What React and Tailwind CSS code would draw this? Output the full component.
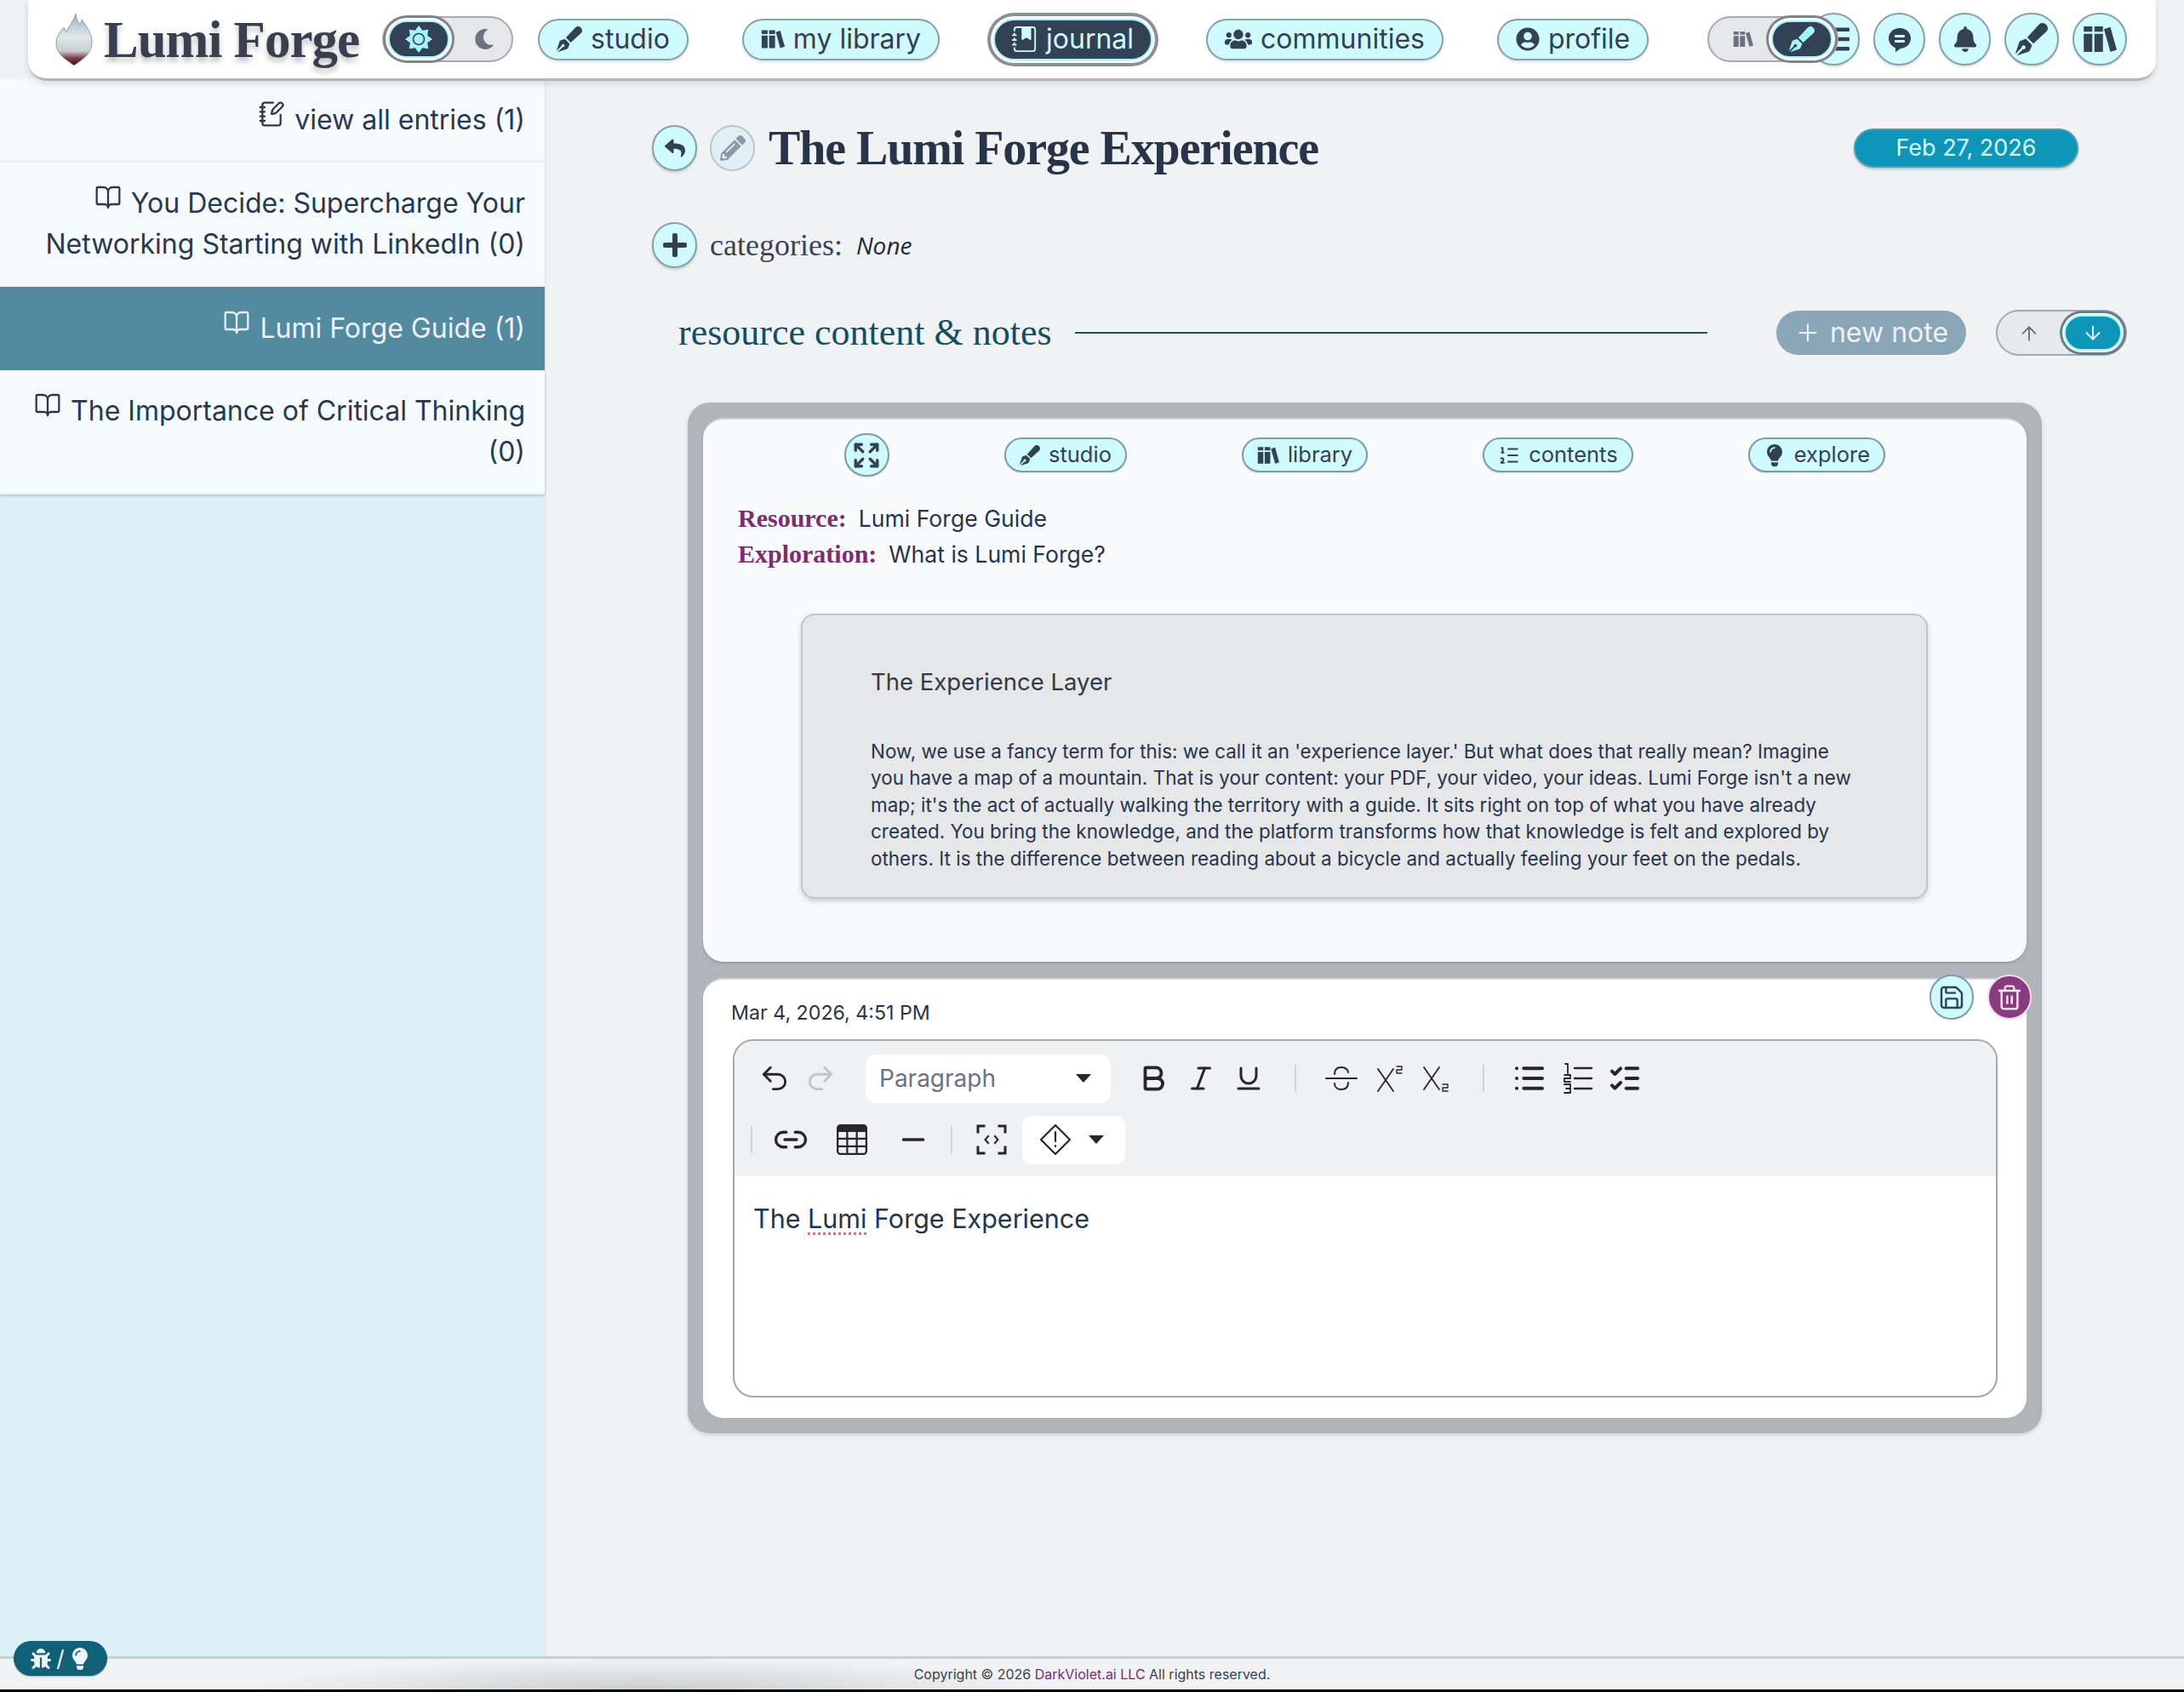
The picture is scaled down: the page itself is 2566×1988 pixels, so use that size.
import React from "react";
import { NotebookPen, BookOpen, Expand, ListOrdered, Save, Trash2, ArrowUp, ArrowDown, Undo2, Redo2, Bold, Italic, Underline, List, ListChecks, Link2, Minus, Plus } from "lucide-react";
import { FaPenFancy, FaUsers, FaUserCircle, FaBell, FaReply, FaPencilAlt, FaPlus, FaLightbulb, FaBug, FaMoon, FaListOl } from "react-icons/fa";
import { BsJournalBookmarkFill, BsTable } from "react-icons/bs";

const sans = "font-['Inter','Liberation_Sans',sans-serif]";
const serif = "font-['Liberation_Serif',serif]";

function Flame() {
  return (
    <svg viewBox="0 0 44 62" className="w-[44px] h-[62px] shrink-0">
      <defs>
        <linearGradient id="fl" x1="0" y1="0" x2="0" y2="1">
          <stop offset="0" stopColor="#9fb4c0" />
          <stop offset="0.45" stopColor="#dfe7ea" />
          <stop offset="0.72" stopColor="#c9cfd2" />
          <stop offset="0.86" stopColor="#7d3b44" />
          <stop offset="1" stopColor="#3d0d14" />
        </linearGradient>
      </defs>
      <path d="M24 1c1 7 3 10 5 13 1-2 2-4 2-6 6 8 12 17 12 27 0 13-10 19-21 27C11 54 1 48 1 36c0-8 5-14 9-19 1 2 1 4 3 6 2-7 9-13 11-22z" fill="url(#fl)" stroke="#8f9aa3" strokeWidth="1" />
    </svg>
  );
}

function Books({ className }) {
  return (
    <svg viewBox="0 0 32 32" className={className} fill="currentColor">
      <path d="M1 4h8v5H1zM1 11h8v17H1zM11 4h8v5h-8zM11 11h8v17h-8z" />
      <path d="M20 6.500l6-2 6 21.500-6 2z" />
    </svg>
  );
}

function Sun() {
  const pts = [];
  for (let i = 0; i < 16; i++) {
    const r = i % 2 ? 11 : 16;
    const a = (i * Math.PI) / 8 - Math.PI / 2;
    pts.push(`${16 + r * Math.cos(a)},${16 + r * Math.sin(a)}`);
  }
  return (
    <svg viewBox="0 0 32 32" className="w-[32px] h-[32px]">
      <polygon points={pts.join(" ")} fill="#a5f3fc" />
      <circle cx="16" cy="16" r="6.5" fill="#a5f3fc" stroke="#334155" strokeWidth="1.6" />
    </svg>
  );
}

function Chat() {
  return (
    <svg viewBox="0 0 32 32" className="w-[32px] h-[32px]">
      <path d="M16 3C8.500 3 3 8.300 3 15c0 5.300 3.500 9.500 8 11.200V31l6.500-4.200C24.500 26.200 29 21.300 29 15 29 8.300 23.500 3 16 3z" fill="#334155" />
      <rect x="10" y="11" width="12" height="3" rx="1" fill="#cffafe" />
      <rect x="10" y="17" width="12" height="3" rx="1" fill="#cffafe" />
    </svg>
  );
}

function Caret({ className }) {
  return (
    <svg viewBox="0 0 18 10" className={className}>
      <polygon points="0,0 18,0 9,10" fill="#27272a" />
    </svg>
  );
}

function TIcon({ children, sw = 2 }) {
  return (
    <svg viewBox="0 0 38 38" className="w-[38px] h-[38px]" fill="none" stroke="#27272a" strokeWidth={sw} strokeLinecap="round" strokeLinejoin="round">
      {children}
    </svg>
  );
}

function NavPill({ icon, children }) {
  return (
    <div className="h-[49px] px-[20px] flex items-center gap-[10px] rounded-full bg-[#cffafe] border-2 border-[#86a1a9] text-[#334155] text-[32px] shadow-[0_2px_3px_rgba(0,0,0,0.12)]">
      {icon}
      <span>{children}</span>
    </div>
  );
}

function Round({ children, className = "w-[61px]" }) {
  return (
    <div className={`h-[62px] rounded-full bg-[#cffafe] border-2 border-[#86a1a9] flex items-center justify-center text-[#334155] shadow-[0_2px_3px_rgba(0,0,0,0.12)] ${className}`}>
      {children}
    </div>
  );
}

function Small({ children, className = "" }) {
  return (
    <div className={`w-[53px] h-[54px] rounded-full bg-[#cffafe] border-2 border-[#86a1a9] flex items-center justify-center text-[#334155] shadow-[0_2px_3px_rgba(0,0,0,0.15)] shrink-0 ${className}`}>
      {children}
    </div>
  );
}

function CardPill({ icon, children }) {
  return (
    <div className="h-[41px] px-[16px] flex items-center gap-[10px] rounded-full bg-[#cffafe] border-2 border-[#7f9ca5] text-[#334155] text-[25.5px] shadow-[0_1px_2px_rgba(0,0,0,0.12)]">
      {icon}
      <span>{children}</span>
    </div>
  );
}

function SideItem({ icon, children, active, last }) {
  return (
    <div className={`px-[23px] text-right text-[32px] leading-[48px] ${active ? "py-[25px] bg-[#528a9f] text-[#eef1fb]" : "py-[24px] bg-[#f5fafd] text-[#2b384c] border-b-2 border-[#eef1f3]"} ${last ? "shadow-[0_2px_3px_rgba(0,0,0,0.18)]" : ""}`}>
      <span className="inline-block w-[32px] h-[20px] mr-[11px]">{icon}</span>
      {children}
    </div>
  );
}

function Tb({ children, className = "" }) {
  return <div className={`w-[56px] h-[56px] flex items-center justify-center text-[#27272a] shrink-0 ${className}`}>{children}</div>;
}

function Tw({ children, className = "" }) {
  return <div className={`w-[72px] h-[56px] flex items-center justify-center text-[#27272a] shrink-0 ${className}`}>{children}</div>;
}

function Sep({ className = "" }) {
  return <div className={`w-[2px] h-[32px] bg-[#d2d4d8] shrink-0 ${className}`} />;
}

const sideIcon = "block w-[32px] h-[32px] -mt-[14px]";

export default function App() {
  return (
    <div className={`${sans} relative w-[2566px] h-[1988px] overflow-hidden bg-[#f1f2f4] flex flex-col`}>
      <header className="relative z-20 mx-[33px] h-[95px] shrink-0 bg-white rounded-b-[22px] border-b-[3px] border-[#b3b4ba] shadow-[0_3px_8px_rgba(0,0,0,0.12)] flex items-center pl-[32px] pr-[34px]">
        <Flame />
        <div className={`${serif} ml-[13px] text-[61px] font-bold leading-none text-[#38404f] tracking-[-1px] [text-shadow:0_5px_6px_rgba(0,0,0,0.25)] whitespace-nowrap`}>Lumi Forge</div>
        <div className="relative ml-[27px] w-[154px] h-[54px] rounded-full bg-[#e5e7eb] border-2 border-[#a6a9af] shrink-0">
          <div className="absolute left-[5px] top-[3px] w-[72px] h-[44px] rounded-full bg-[#334155] border-2 border-[#a5f3fc] shadow-[0_0_0_3px_white,0_0_0_6px_#80848c] flex items-center justify-center"><Sun /></div>
          <FaMoon className="absolute left-[106px] top-[13px] text-[#6b7280] w-[24px] h-[24px]" />
        </div>
        <div className="ml-[29px] flex items-center gap-[63px]">
          <NavPill icon={<FaPenFancy className="w-[30px] h-[30px]" />}>studio</NavPill>
          <NavPill icon={<Books className="w-[28px] h-[28px]" />}>my library</NavPill>
          <div className="h-[49px] px-[20px] flex items-center gap-[10px] rounded-full bg-[#334155] border-2 border-[#a5f3fc] text-[#cffafe] text-[32px] shadow-[0_0_0_3px_white,0_0_0_7px_#8b8f98]">
            <BsJournalBookmarkFill className="w-[30px] h-[32px]" />
            <span>journal</span>
          </div>
          <NavPill icon={<FaUsers className="w-[32px] h-[32px]" />}>communities</NavPill>
          <NavPill icon={<FaUserCircle className="w-[28px] h-[28px]" />}>profile</NavPill>
        </div>
        <div className="ml-auto flex items-center gap-[16px]">
          <div className="relative z-10 w-[154px] h-[54px] -mr-[52px] rounded-full bg-[#e5e7eb] border-2 border-[#a6a9af] shrink-0">
            <Books className="absolute left-[28px] top-[13px] w-[24px] h-[24px] text-[#6b7280]" />
            <div className="absolute right-[5px] top-[3px] w-[72px] h-[44px] rounded-full bg-[#334155] border-2 border-[#a5f3fc] shadow-[0_0_0_3px_white,0_0_0_6px_#80848c] flex items-center justify-center"><FaPenFancy className="w-[30px] h-[30px] text-[#a5f3fc]" /></div>
          </div>
          <Round><FaListOl className="w-[36px] h-[36px]" /></Round>
          <Round><Chat /></Round>
          <Round><FaBell className="w-[28px] h-[30px]" /></Round>
          <Round className="w-[64px]"><FaPenFancy className="w-[38px] h-[38px]" /></Round>
          <Round className="w-[64px]"><Books className="w-[40px] h-[40px]" /></Round>
        </div>
      </header>

      <div className="flex-1 min-h-0 flex">
        <aside className="w-[642px] shrink-0 -mt-[2px] bg-[#dcf1f7] border-r-2 border-[#e7e9ec]">
          <SideItem icon={<NotebookPen className={sideIcon} strokeWidth={1.7} />}>view all entries (1)</SideItem>
          <SideItem icon={<BookOpen className={sideIcon} strokeWidth={1.7} />}>You Decide: Supercharge Your Networking Starting with LinkedIn (0)</SideItem>
          <SideItem active icon={<BookOpen className={sideIcon} strokeWidth={1.7} />}>Lumi Forge Guide (1)</SideItem>
          <SideItem last icon={<BookOpen className={sideIcon} strokeWidth={1.7} />}>The Importance of Critical Thinking (0)</SideItem>
        </aside>

        <main className="flex-1 min-w-0 pl-[124px] pr-[67px] pt-[52px]">
          <div className="flex items-center h-[54px]">
            <Small><FaReply className="w-[24px] h-[24px]" /></Small>
            <Small className="ml-[15px] bg-[#dff1f4] border-[#b9c8cc] shadow-none"><FaPencilAlt className="w-[30px] h-[30px] text-[#9198a3]" /></Small>
            <h1 className={`${serif} ml-[16px] text-[56px] font-bold text-[#28344a] leading-none tracking-[-1.1px] whitespace-nowrap`}>The Lumi Forge Experience</h1>
            <div className="ml-auto mr-[57px] w-[264px] h-[46px] rounded-full bg-[#0e96b8] border-2 border-[#4b9db6] text-[#cffafe] text-[27px] flex items-center justify-center shadow-[0_2px_3px_rgba(0,0,0,0.2)]">Feb 27, 2026</div>
          </div>
          <div className="mt-[60px] flex items-center h-[54px]">
            <Small><FaPlus className="w-[32px] h-[32px]" /></Small>
            <span className={`${serif} ml-[15px] text-[36px] text-[#3b4252]`}>categories:</span>
            <span className="ml-[16px] text-[28px] italic text-[#1f2937] font-['Open_Sans',sans-serif]">None</span>
          </div>
          <div className="mt-[48px] flex items-center h-[55px] pl-[31px]">
            <span className={`${serif} text-[44px] text-[#124f61] whitespace-nowrap`}>resource content &amp; notes</span>
            <div className="flex-1 ml-[27px] mr-[81px] h-[2px] bg-[#1c5266]" />
            <div className="w-[223px] h-[52px] rounded-full bg-[#8aa6b7] text-[#f1f0f8] text-[32px] flex items-center justify-center gap-[10px]">
              <Plus className="w-[32px] h-[32px]" strokeWidth={1.6} />
              <span>new note</span>
            </div>
            <div className="relative ml-[35px] w-[154px] h-[54px] rounded-full bg-[#e8e9ec] border-2 border-[#a6a9af] shrink-0">
              <ArrowUp className="absolute left-[24px] top-[13px] w-[26px] h-[26px] text-[#5e6470]" strokeWidth={1.6} />
              <div className="absolute right-[4px] top-[4px] w-[68px] h-[42px] rounded-full bg-[#0e96b8] border-2 border-[#a5f3fc] shadow-[0_0_0_2px_white,0_0_0_5px_#64808f] flex items-center justify-center"><ArrowDown className="w-[26px] h-[26px] text-[#eafcff]" strokeWidth={1.8} /></div>
            </div>
          </div>

          <section className="mt-[55px] ml-[42px] w-[1591px] h-[1211px] rounded-[26px] bg-[#b0b5bc] p-[18px] flex flex-col gap-[19px] shadow-[0_2px_5px_rgba(0,0,0,0.15)]">
            <div className="h-[639px] shrink-0 rounded-[24px] bg-[#f9fafc] pt-[16px] border-t-2 border-[#d0d3d8] shadow-[0_2px_3px_rgba(0,0,0,0.15)]">
              <div className="flex items-center justify-center gap-[135px] h-[51px]">
                <div className="w-[53px] h-[51px] rounded-full bg-[#cffafe] border-2 border-[#7f9ca5] flex items-center justify-center text-[#334155] shadow-[0_1px_2px_rgba(0,0,0,0.12)]"><Expand className="w-[34px] h-[34px]" strokeWidth={2.4} /></div>
                <CardPill icon={<FaPenFancy className="w-[24px] h-[24px]" />}>studio</CardPill>
                <CardPill icon={<Books className="w-[26px] h-[26px]" />}>library</CardPill>
                <CardPill icon={<ListOrdered className="w-[26px] h-[26px]" strokeWidth={1.8} />}>contents</CardPill>
                <CardPill icon={<FaLightbulb className="w-[26px] h-[26px]" />}>explore</CardPill>
              </div>
              <div className="mt-[28px] pl-[41px] text-[26.6px] leading-[42px] text-[#28344a]">
                <div className="flex"><span className={`${serif} font-bold text-[#7b2d6e] text-[30px] mr-[14px]`}>Resource:</span><span>Lumi Forge Guide</span></div>
                <div className="flex"><span className={`${serif} font-bold text-[#7b2d6e] text-[30px] mr-[14px]`}>Exploration:</span><span>What is Lumi Forge?</span></div>
              </div>
              <div className="mt-[49px] ml-[115px] w-[1324px] h-[335px] rounded-[16px] bg-[#e5e7e9] border-2 border-[#c3c6cb] shadow-[0_3px_6px_rgba(0,0,0,0.18)] pl-[80px] pr-[80px] pt-[58px]">
                <div className="text-[27.5px] leading-[40px] text-[#2f3a4c]">The Experience Layer</div>
                <p className="mt-[46px] text-[22.45px] leading-[31.4px] text-[#28344a]">Now, we use a fancy term for this: we call it an 'experience layer.' But what does that really mean? Imagine you have a map of a mountain. That is your content: your PDF, your video, your ideas. Lumi Forge isn't a new map; it's the act of actually walking the territory with a guide. It sits right on top of what you have already created. You bring the knowledge, and the platform transforms how that knowledge is felt and explored by others. It is the difference between reading about a bicycle and actually feeling your feet on the pedals.</p>
              </div>
            </div>

            <div className="relative h-[517px] shrink-0 rounded-[24px] bg-white pt-[23px] border-t-2 border-[#d0d3d8]">
              <div className="absolute -top-[6px] -right-[6px] flex gap-[16px]">
                <div className="w-[52px] h-[53px] rounded-full bg-[#cffafe] border-2 border-[#7f9ca5] flex items-center justify-center text-[#2b4552]"><Save className="w-[32px] h-[32px]" strokeWidth={1.8} /></div>
                <div className="w-[52px] h-[53px] rounded-full bg-[#8a3a80] border-2 border-[#f8d9f3] flex items-center justify-center text-[#fbeaf8]"><Trash2 className="w-[32px] h-[32px]" strokeWidth={1.8} /></div>
              </div>
              <div className="pl-[33px] text-[23.2px] leading-[32px] text-[#28344a]">Mar 4, 2026, 4:51 PM</div>
              <div className="mt-[15px] ml-[35px] w-[1486px] h-[421px] rounded-[24px] border-2 border-[#a3a7ae] overflow-hidden">
                <div className="h-[159px] bg-[#f0f1f3] rounded-t-[22px] pt-[8px]">
                  <div className="h-[72px] flex items-center pl-[20px]">
                    <div className="w-[54px] flex justify-center shrink-0"><Undo2 className="w-[38px] h-[38px] text-[#27272a]" strokeWidth={1.8} /></div>
                    <div className="w-[54px] flex justify-center shrink-0"><Redo2 className="w-[38px] h-[38px] text-[#c2c4ca]" strokeWidth={1.8} /></div>
                    <div className="ml-[26px] w-[288px] h-[57px] rounded-[12px] bg-white flex items-center justify-between pl-[16px] pr-[23px] text-[28px] text-[#6b7280] shrink-0">
                      <span>Paragraph</span>
                      <Caret className="w-[18px] h-[10px]" />
                    </div>
                    <Tb className="ml-[22px]"><Bold className="w-[38px] h-[38px]" strokeWidth={2.4} /></Tb>
                    <Tb><Italic className="w-[36px] h-[36px]" strokeWidth={2} /></Tb>
                    <Tb><Underline className="w-[36px] h-[36px]" strokeWidth={2} /></Tb>
                    <div className="w-[53px] flex justify-center shrink-0"><Sep /></div>
                    <Tb>
                      <TIcon>
                        <path d="M1 19h36" />
                        <path d="M11 14c0-5 3-8 8-8s8 3 8 6" />
                        <path d="M11 25c0 4 3 7 8 7s8-3 8-8" />
                      </TIcon>
                    </Tb>
                    <Tb>
                      <TIcon sw={1.8}>
                        <path d="M6 8l18 26M24 8L6 34" />
                        <path d="M28 5h6v4h-6v4h6" strokeWidth={1.4} />
                      </TIcon>
                    </Tb>
                    <Tb>
                      <TIcon sw={1.8}>
                        <path d="M4 6l18 26M22 6L4 32" />
                        <path d="M26 26h6v4h-6v4h6" strokeWidth={1.4} />
                      </TIcon>
                    </Tb>
                    <div className="w-[53px] flex justify-center shrink-0"><Sep /></div>
                    <Tb><List className="w-[40px] h-[40px]" strokeWidth={2.4} /></Tb>
                    <Tb>
                      <TIcon sw={2.4}>
                        <path d="M16 7h20M16 19h20M16 31h20" />
                        <path d="M5 2h3v11" strokeWidth={1.8} />
                        <path d="M4 15h7v4H4v4h7" strokeWidth={1.8} />
                        <path d="M4 26h7v10H4M6 31h5" strokeWidth={1.8} />
                      </TIcon>
                    </Tb>
                    <Tb><ListChecks className="w-[40px] h-[40px]" strokeWidth={2.4} /></Tb>
                  </div>
                  <div className="h-[72px] flex items-center">
                    <Sep className="ml-[19px]" />
                    <Tw className="ml-[9px]"><Link2 className="w-[42px] h-[42px]" strokeWidth={1.9} /></Tw>
                    <Tw><BsTable className="w-[36px] h-[36px]" /></Tw>
                    <Tw><Minus className="w-[40px] h-[40px]" strokeWidth={2} /></Tw>
                    <Sep className="ml-[8px]" />
                    <Tw className="ml-[10px]">
                      <svg viewBox="0 0 36 36" className="w-[36px] h-[36px]" fill="none" stroke="#27272a" strokeWidth="3" strokeLinecap="square" strokeLinejoin="miter">
                        <path d="M2 9V2h7M27 2h7v7M34 27v7h-7M9 34H2v-7" />
                        <path d="M14 14l-3.500 4 3.500 4M22 14l3.500 4-3.500 4" strokeWidth="2" />
                      </svg>
                    </Tw>
                    <div className="w-[121px] h-[57px] rounded-[12px] bg-white flex items-center pl-[20px] gap-[20px] shrink-0">
                      <svg viewBox="0 0 38 38" className="w-[38px] h-[38px]" fill="none" stroke="#27272a" strokeWidth="2.200" strokeLinejoin="round" strokeLinecap="round">
                        <path d="M19 2l17 17-17 17L2 19z" />
                        <path d="M19 10v11M19 26v1" />
                      </svg>
                      <Caret className="w-[18px] h-[10px]" />
                    </div>
                  </div>
                </div>
                <div className="px-[22px] pt-[30px] text-[30.5px] leading-[40px] text-[#28344a]">The <span className="underline decoration-dotted decoration-[#e06c75] underline-offset-[5px]">Lumi</span> Forge Experience</div>
              </div>
            </div>
          </section>
        </main>
      </div>

      <footer className="relative shrink-0 h-[39px] bg-[#f1f2f4] border-t-[3px] border-[#cbced3] flex items-center justify-center text-[16px] text-[#374151]">
        <div className="absolute left-[300px] bottom-0 w-[920px] h-[36px] bg-[radial-gradient(ellipse_at_bottom,#cdced2_0%,transparent_72%)]" />
        <span className="relative">Copyright © 2026 <span className="text-[#7b2d6e]">DarkViolet.ai LLC</span> All rights reserved.</span>
      </footer>
      <div className="h-[3px] bg-black shrink-0" />

      <div className="absolute left-[16px] top-[1928px] w-[110px] h-[41px] rounded-full bg-[#125f78] flex items-center justify-center gap-[6px] text-[#eef6f8] text-[26px] shadow-[0_1px_2px_rgba(0,0,0,0.25)]">
        <FaBug className="w-[24px] h-[26px]" />
        <span className="leading-none">/</span>
        <FaLightbulb className="w-[24px] h-[26px]" />
      </div>
    </div>
  );
}
